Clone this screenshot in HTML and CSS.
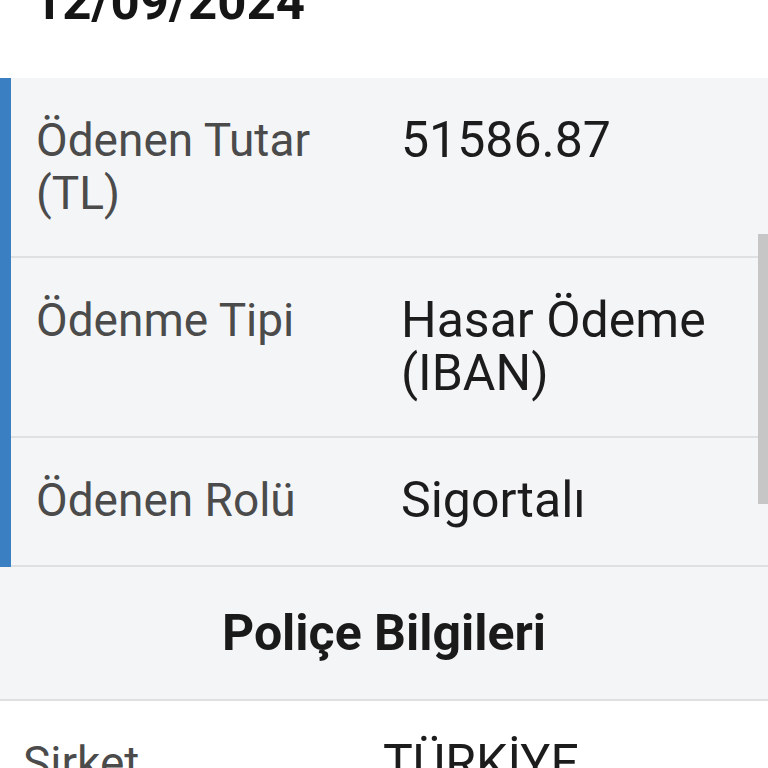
FILE: index.html
```html
<!doctype html>
<html lang="tr">
  <head>
    <meta charset="UTF-8" />
    <meta name="viewport" content="width=device-width, initial-scale=1.0" />
    <title>Hasar Ödeme Detayı</title>
    <link rel="stylesheet" href="styles.css">
  </head>
  <body>
    <div class="page">
      <div class="date-row">
        <span class="date">12/09/2024</span>
      </div>
      <div class="detail-card">
        <div class="detail-row">
          <div class="detail-label">Ödenen Tutar (TL)</div>
          <div class="detail-value">51586.87</div>
        </div>
        <div class="detail-row">
          <div class="detail-label">Ödenme Tipi</div>
          <div class="detail-value">Hasar Ödeme (IBAN)</div>
        </div>
        <div class="detail-row">
          <div class="detail-label">Ödenen Rolü</div>
          <div class="detail-value">Sigortalı</div>
        </div>
      </div>
      <div class="section-title">Poliçe Bilgileri</div>
      <div class="info-list">
        <div class="detail-row">
          <div class="detail-label">Şirket</div>
          <div class="detail-value">TÜRKİYE SİGORTA</div>
        </div>
      </div>
    </div>
    <div class="scrollbar"></div>
  </body>
</html>
```

FILE: styles.css
```css
html,
body {
  margin: 0;
  height: 100%;
  overflow: hidden;
}
body {
  font-family: Roboto, "Noto Sans", Arial, sans-serif;
  background-color: #fff;
  color: #1c1c1c;
}

.page {
  margin-top: -28px;
}

.date-row {
  padding: 0 0 46px 33px;
}
.date {
  font-size: 51px;
  line-height: 60px;
  font-weight: 700;
  color: #151515;
}

.detail-card {
  background-color: #f4f5f7;
  border-left: 11px solid #3a7fc1;
}

.detail-row {
  display: grid;
  grid-template-columns: 340px 1fr;
  column-gap: 25px;
  padding: 36px 20px 36px 25px;
  border-bottom: 2px solid #dfe0e2;
}
.detail-card .detail-row:nth-child(3) {
  padding-bottom: 38px;
}
.detail-label {
  font-size: 46px;
  line-height: 53px;
  color: #4b4b4b;
}
.detail-value {
  font-size: 50px;
  line-height: 53px;
  color: #1c1c1c;
}

.section-title {
  background-color: #f4f5f7;
  border-bottom: 2px solid #dfe0e2;
  padding: 36px 0;
  text-align: center;
  font-size: 50px;
  line-height: 60px;
  font-weight: 700;
  color: #1a1a1a;
}

.info-list {
  background-color: #fff;
}
.info-list .detail-row {
  grid-template-columns: 335px 1fr;
  padding-left: 23px;
  border-bottom: none;
}

.scrollbar {
  position: absolute;
  top: 234px;
  right: 0;
  width: 10px;
  height: 270px;
  background-color: #c6c6c6;
}
```
